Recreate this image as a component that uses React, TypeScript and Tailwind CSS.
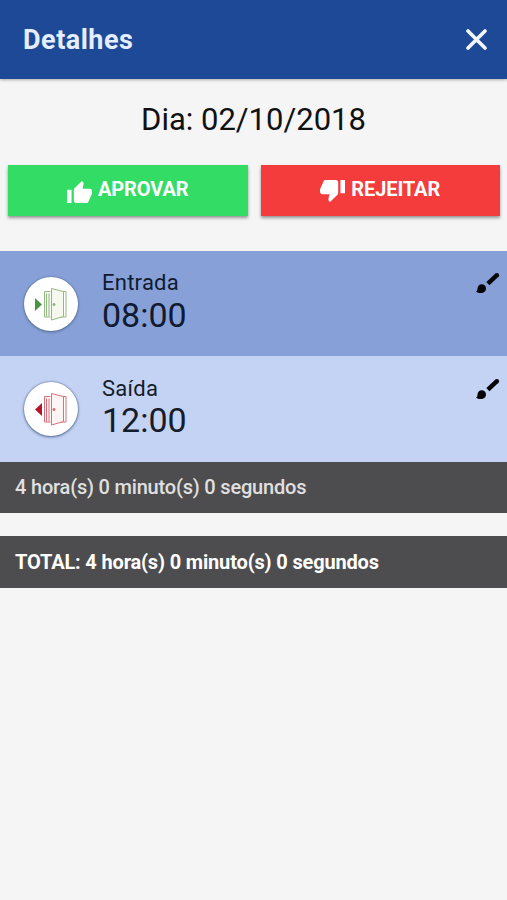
const CloseIcon = () => (
  <svg className="h-[21px] w-[21px]" viewBox="0 0 21 21" fill="none" stroke="#f2f8ff" strokeWidth="3.6" strokeLinecap="round">
    <path d="M2 2 19 19M19 2 2 19" />
  </svg>
);

const thumb =
  "M1 21h4V9H1v12zm22-11c0-1.100-.9-2-2-2h-6.310l.95-4.570.03-.32c0-.41-.17-.79-.44-1.060L14.170 1 7.590 7.590C7.220 7.950 7 8.450 7 9v10c0 1.100.9 2 2 2h9c.83 0 1.540-.5 1.840-1.220l3.020-7.050c.09-.23.14-.47.14-.73v-2z";

const ThumbIcon = ({ down = false }: { down?: boolean }) => (
  <svg
    className={down ? "h-[22px] w-[25px] shrink-0 rotate-180" : "h-[22px] w-[25px] shrink-0"}
    viewBox="1 1 22 20"
    preserveAspectRatio="none"
    fill="#fff"
  >
    <path d={thumb} />
  </svg>
);

const BrushIcon = () => (
  <svg className="h-[22px] w-[24px]" viewBox="0 0 24 22" fill="#050505">
    <path d="M11.900 11.700 20.900 3.200" stroke="#050505" strokeWidth="4.400" />
    <circle cx="20.900" cy="3.200" r="2.200" />
    <path d="M0 19.600c1.300-.5 1.400-1.700 1.500-3.100.2-2.500 1.800-4.300 4.200-4.300 2.500 0 4.300 1.900 4.300 4.300 0 2.700-2.100 4.600-5.200 4.600-1.900 0-3.500-.5-4.800-1.500z" />
  </svg>
);

const DoorIcon = ({ out = false }: { out?: boolean }) => {
  const c = out ? "#d6707b" : "#94b884";
  const fill = out ? "#fff4f4" : "#f4f8ed";
  return (
    <svg className="h-[36px] w-[34px]" viewBox="0 0 34 36" fill="none" stroke={c} strokeWidth="1">
      <path
        d={out ? "M8 12v13l-7-6.500z" : "M1 12v13l7-6.500z"}
        fill={out ? "#b51529" : "#4b9540"}
        stroke="none"
      />
      <path d="M16.500 5.500h-6v25.500h6M12.500 7.500v23M15 7.500v23" fill={fill} />
      <path d="M29 5.500h3v25.500h-13" />
      <path d="M17.500 2.500 29.500 5.500v25L17.500 34z" fill={fill} />
      <circle cx="20" cy="18.500" r="1.100" fill={c} />
    </svg>
  );
};

function Punch({ label, time, out = false }: { label: string; time: string; out?: boolean }) {
  return (
    <div
      className={
        out
          ? "flex h-[106px] items-start bg-[#c4d2f4] pl-6 pr-[7px]"
          : "flex h-[105px] items-start bg-[#87a1d8] pl-6 pr-[7px]"
      }
    >
      <div className="mt-[26px] flex h-[54px] w-[54px] shrink-0 items-center justify-center rounded-full bg-white shadow-[0_0_2px_#526b94,0_1px_3px_#526b94]">
        <DoorIcon out={out} />
      </div>
      <div className={out ? "ml-6 flex-1 pt-5 text-[#151c2a]" : "ml-6 flex-1 pt-[19px] text-[#101a30]"}>
        <div className="text-[22px] leading-[26px] tracking-[0.25px]">{label}</div>
        <div className={out ? "-mt-px text-[34px] leading-[38px]" : "text-[34px] leading-[38px]"}>{time}</div>
      </div>
      <div className={out ? "mt-[22px]" : "mt-[21px]"}>
        <BrushIcon />
      </div>
    </div>
  );
}

export default function App() {
  return (
    <div className="h-[900px] w-full overflow-hidden bg-[#f5f5f5] font-[Roboto,sans-serif]">
      <header className="flex h-[79px] items-center justify-between bg-[#1d4996] pl-[23px] pr-5 shadow-[0_1px_3px_rgba(0,0,0,0.3)]">
        <h1 className="pt-[2px] text-[27px] font-bold tracking-[0.5px] text-[#e4eeff]">Detalhes</h1>
        <CloseIcon />
      </header>
      <h2 className="pt-[21px] text-center text-[31px] leading-[40px] text-[#111]">Dia: 02/10/2018</h2>
      <div className="mt-[25px] flex gap-[13px] pl-2 pr-[7px] text-[20px] font-bold tracking-[-0.1px] text-white">
        <button className="flex h-[51px] flex-1 items-center justify-center gap-[6px] bg-[#33dc65] shadow-[0_2px_3px_rgba(0,0,0,0.4)]">
          <span className="mt-[3px]"><ThumbIcon /></span>
          <span className="-mt-[3px]">APROVAR</span>
        </button>
        <button className="flex h-[51px] flex-1 items-center justify-center gap-[6px] bg-[#f43c3c] shadow-[0_2px_3px_rgba(0,0,0,0.4)]">
          <span className="mt-[1px]"><ThumbIcon down /></span>
          <span className="-mt-[3px]">REJEITAR</span>
        </button>
      </div>
      <div className="mt-[35px]">
        <Punch label="Entrada" time="08:00" />
        <Punch label="Saída" time="12:00" out />
      </div>
      <div className="h-[51px] bg-[#4d4d4f] pl-[15px] text-[20px] font-medium leading-[51px] tracking-[-0.19px] text-[#e0e0e0]">
        4 hora(s) 0 minuto(s) 0 segundos
      </div>
      <div className="mt-[23px] h-[52px] bg-[#4d4d4f] pl-[15px] text-[20px] font-bold leading-[53px] tracking-[-0.16px] text-white">
        TOTAL: 4 hora(s) 0 minuto(s) 0 segundos
      </div>
    </div>
  );
}
